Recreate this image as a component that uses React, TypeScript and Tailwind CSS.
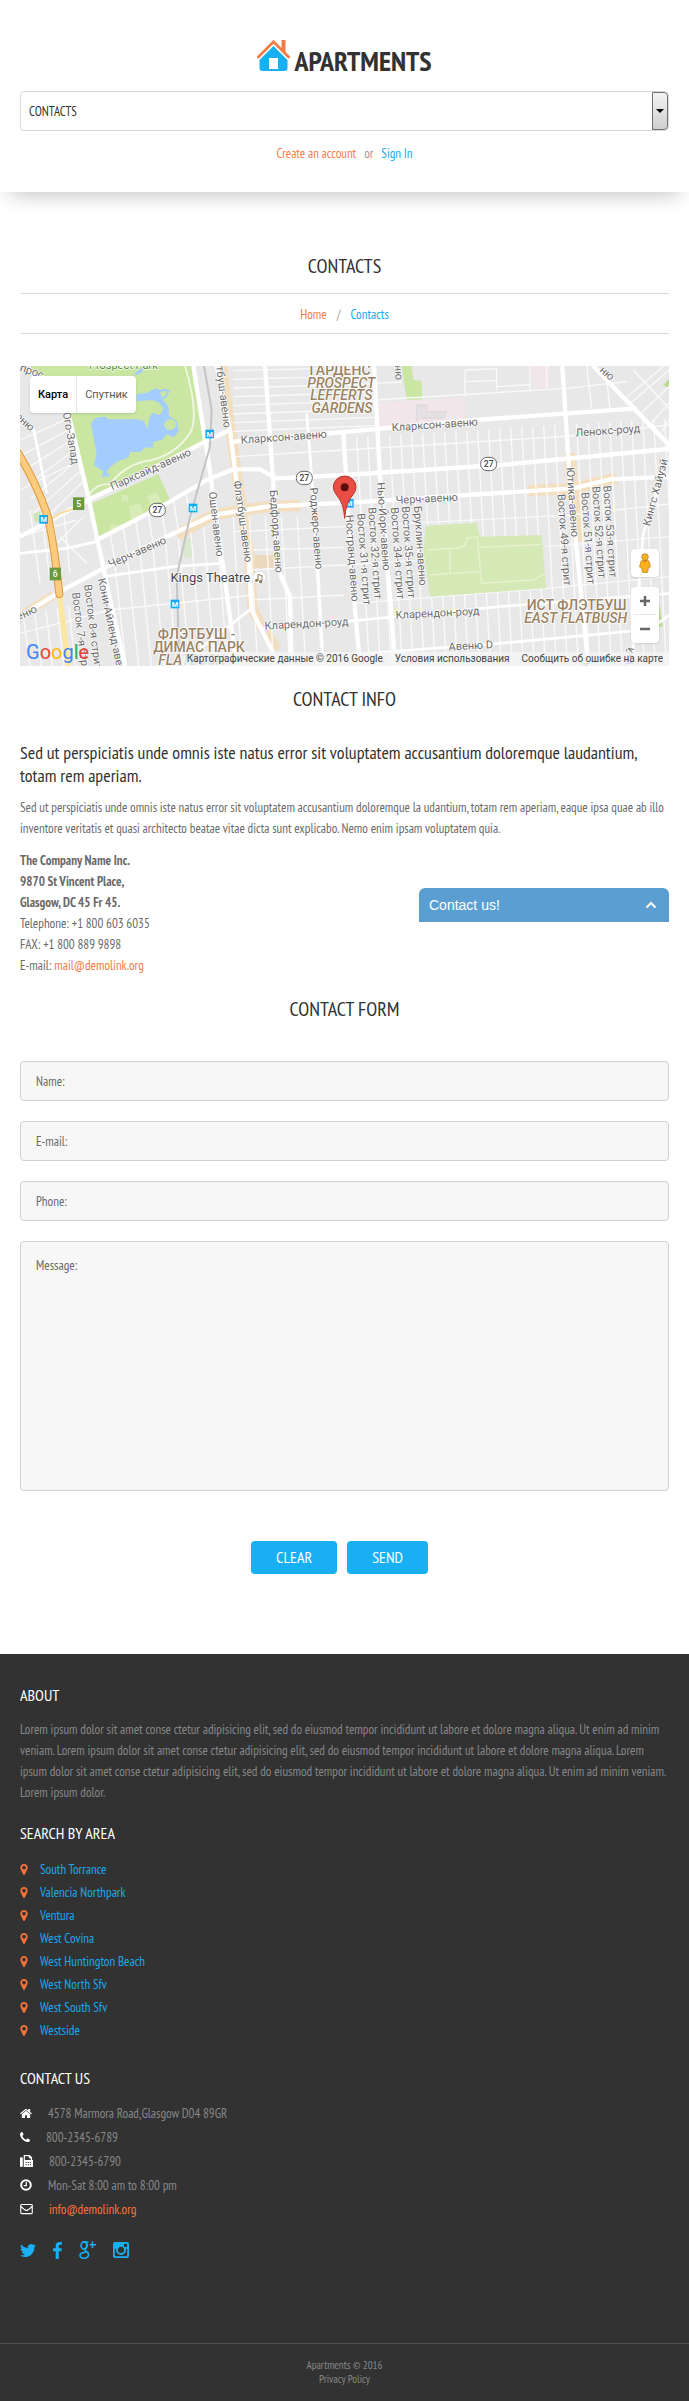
import { useState } from "react";
import type { ReactNode } from "react";

const areas = [
  "South Torrance",
  "Valencia Northpark",
  "Ventura",
  "West Covina",
  "West Huntington Beach",
  "West North Sfv",
  "West South Sfv",
  "Westside",
];

const fields = [
  { id: "name", label: "Name:", type: "text" },
  { id: "email", label: "E-mail:", type: "email" },
  { id: "phone", label: "Phone:", type: "tel" },
];

// [text, x, y, rotation]
const streets: [string, number, number, number][] = [
  ["Кларксон-авеню", 852, 272, -4],
  ["Кларксон-авеню", 1305, 235, -4],
  ["Парксайд-авеню", 456, 368, -24],
  ["Черч-авеню", 416, 616, -24],
  ["Черч-авеню", 1281, 457, -3],
  ["Ошен-авеню", 638, 524, 83],
  ["Флэтбуш-авеню", 718, 516, 82],
  ["тбуш-авеню", 660, 142, 83],
  ["Бедфорд-авеню", 818, 545, 86],
  ["Роджерс-авеню", 938, 536, 86],
  ["Кони-Айленд-авеню", 326, 840, 78],
  ["Восток 8-я стрит", 268, 832, 83],
  ["Восток 7-я стрит", 232, 856, 83],
  ["Ого-Запад", 202, 266, 80],
  ["Кларендон-роуд", 920, 832, -3],
  ["Кларендон-роуд", 1313, 800, -3],
  ["Авеню D", 1413, 898, -3],
  ["Ленокс-роуд", 1824, 253, -4],
  ["Ностранд-авеню", 1046, 625, 86],
  ["Восток 31-я стрит", 1081, 628, 86],
  ["Восток 32-я стрит", 1114, 610, 86],
  ["Нью-Йорк-авеню", 1140, 530, 86],
  ["Восток 34-я стрит", 1182, 610, 86],
  ["Восток 35-я стрит", 1215, 607, 86],
  ["Бруклин-авеню", 1250, 588, 86],
  ["Восток 49-я стрит", 1682, 570, 86],
  ["Ютика-авеню", 1707, 457, 86],
  ["Восток 51-я стрит", 1753, 565, 86],
  ["Восток 52-я стрит", 1786, 547, 86],
  ["Восток 53-я стрит", 1819, 545, 86],
  ["Кингс Хайуэй", 1977, 430, -75],
  ["еню", 84, 798, -24],
  ["еню", 68, 224, 42],
  ["прос", 92, 74, 20],
  ["ню", 1185, 68, 86],
  ["ню", 1814, 78, 42],
  ["Ют", 1747, 960, 86],
  ["йуэй", 1896, 930, -80],
];

const districts: [string, number, number, boolean][] = [
  ["ГАРДЕНС", 1020, 74, false],
  ["PROSPECT", 1024, 113, true],
  ["LEFFERTS", 1024, 151, true],
  ["GARDENS", 1026, 190, true],
  ["ФЛЭТБУШ -", 590, 868, false],
  ["ДИМАС ПАРК", 597, 907, false],
  ["FLATBUSH", 575, 946, true],
  ["ИСТ ФЛЭТБУШ", 1730, 779, false],
  ["EAST FLATBUSH", 1727, 819, true],
];

const mainRoads = [
  "M205 190L265 440L320 700L375 948",
  "M60 560L265 450L470 350L605 280L690 240",
  "M700 275L1032 246L1400 212L1910 175",
  "M290 570L475 475L620 390L700 358H780L830 385L1032 375L1500 345L2007 297",
  "M60 800L180 725L310 655L500 560L640 495L800 470L1100 455L1400 435L1720 415L1830 388L2007 380",
  "M580 48L625 330L665 620L710 948",
  "M650 48L690 240L710 400L745 620L755 780L840 948",
  "M795 48L820 400L835 660L870 740L875 948",
  "M1122 48L1140 380L1175 800L1185 948",
  "M1030 250L1060 720L1080 948",
  "M1687 48L1710 400L1740 700L1765 948",
  "M1780 48L2007 285",
];

const midRoads = [
  "M100 235L140 430",
  "M60 610L200 595L290 575",
  "M920 190L945 500L970 948",
  "M790 835L1032 815L1500 770L2007 730",
  "M1032 915L1500 880L1950 838L2007 795",
  "M600 895L755 775",
  "M310 680L520 650L660 640",
  "M2000 330L1930 550L1895 948",
];

const minorRoads = [
  ...[0, 1, 2, 3, 4, 5, 6, 7].map((i) => `M700 ${62 + i * 26}L1125 ${52 + i * 25}`),
  ...[0, 1, 2, 3, 4, 5, 6].map((i) => `M${60 + i * 8} ${270 + i * 44}L${205 + i * 9} ${205 + i * 30}`),
  ...[0, 1, 2, 3, 4, 5, 6, 7, 8].map((i) => `M${345 + i * 38} ${650 - i * 17}L${378 + i * 38} 948`),
  ...[0, 1, 2, 3, 4, 5, 6].map((i) => `M${330 + i * 38} ${548 - i * 20}L${346 + i * 38} ${640 - i * 19}`),
  ...Array.from({ length: 29 }, (_, i) => `M${1070 + i * 33} ${262 - i * 2}L${1108 + i * 33} 948`),
  ...[0, 1, 2, 3, 4, 5].map((i) => `M${700 + i * 48} 500L${725 + i * 48} 948`),
  ...[0, 1, 2, 3].map((i) => `M${90 + i * 34} ${480 + i * 5}L${120 + i * 30} ${700 - i * 10}`),
  ...[0, 1, 2, 3, 4].map((i) => `M${70 + i * 34} ${800 - i * 8}L${90 + i * 34} 948`),
  ...[0, 1, 2, 3, 4].map((i) => `M${1885 + i * 30} ${165 + i * 32}L${2007} ${60 + i * 50}`),
  "M60 420L240 330",
  "M60 850L330 780L760 735",
  "M700 320L1032 300L1710 258L2007 225",
  "M700 545L1032 530L1710 495L2007 462",
  "M760 600L1032 592",
  "M750 660L1032 645L1280 630",
  "M1640 590L2007 560",
  "M1060 760L1640 715L2007 680",
  "M750 750L1032 735",
  "M60 560L230 510M150 600L250 500M180 560L260 640",
  "M1125 150L1700 115L1880 95",
  "M1125 100L1205 96M1395 60V140M1395 60L1490 56V120M1590 48V125M1640 48V118",
  "M1395 95L1490 92M1490 110L1590 104M1760 48L1775 175M1820 90L1830 175",
  "M1870 150L1990 50M1900 60L2007 175",
];

const trees = "M365 435h20v20h-20zM385 470l35-12 12 40-35 14zM440 440l30-14 14 26-30 14zM330 525h22v14h-22z";

function CityMap() {
  return (
    <svg
      viewBox="60 48 1947 900"
      preserveAspectRatio="xMidYMid slice"
      className="block h-[300px] w-full bg-[#e8e8e8] font-[Roboto,sans-serif]"
      role="img"
      aria-label="Map"
    >
      <path d="M90 48H582L608 272L345 405L265 440L205 190L180 150Z" fill="#cbe6a3" />
      <path d="M265 465L475 372L513 455L290 567Z" fill="#cbe6a3" />
      <path d="M100 490L150 480V515H105Z" fill="#cfe3b4" />
      <path d={trees} fill="#d8ecb9" />
      <path d="M548 570L578 560V618L552 625Z" fill="#dbe8d0" />
      <path d="M1205 48H1235L1240 90L1265 92L1267 148L1220 150Z" fill="#cbe6a3" />
      <path d="M1990 105L2007 88V115ZM1978 765L1988 830H1965V765Z" fill="#b9dd8d" />
      <path d="M1130 160L1395 142V205L1135 232ZM1590 48H1650L1645 110L1605 115Z" fill="#f3e6eb" />
      <path d="M1250 165h30v20h60l-10 20h-70l-12 8z" fill="#e4e0e4" stroke="#d2d2d2" strokeWidth="2" />

      {/* lake */}
      <path
        transform="translate(60 48)"
        d="M213 175Q222 152 245 153Q262 150 262 160L350 160L372 165L382 190L390 150L400 140L420 148L430 128L418 110L395 102L350 106V84L380 80L408 67L420 72L425 98L445 120L447 150L470 165L476 195L462 214L440 205L425 222L400 228L398 246L376 244L362 258L330 258L325 275L295 285L268 305L260 318L270 330L245 334L250 316L222 298L230 262Z"
        fill="#a3ccff"
      />
      <path d="M510 208a18 16 0 1 0 1 0z" fill="#cbe6a3" />
      <path d="M410 65L430 48L425 68L400 78Z" fill="#a3ccff" />
      <path d="M470 130Q490 115 505 122Q500 145 482 146" fill="none" stroke="#a3ccff" strokeWidth="6" />
      <path d="M268 432Q290 400 330 402Q370 350 430 335Q530 320 575 240Q595 180 555 48" fill="none" stroke="#f2f8e6" strokeWidth="5" />

      <g fill="none" stroke="#f3dfc0">
        <path d="M665 48L692 240L714 400L748 620L758 780L830 900" strokeWidth="32" />
        <path d="M530 555L640 495L800 470L900 466M1585 422L1720 415L1850 385M1710 310L1716 410L1735 575" strokeWidth="34" />
        <path d="M60 800L160 735" strokeWidth="26" />
      </g>
      <path d="M765 615H820V655H765Z" fill="#ecd9bd" />

      <g fill="none" stroke="#fafafa" strokeWidth="4">
        {minorRoads.map((d) => (
          <path key={d} d={d} />
        ))}
      </g>
      <path d="M1278 527L1430 518L1440 560L1625 555L1638 715L1290 740L1270 600Z" fill="#d5e9b7" />
      <path d="M1280 600L1350 595V670L1440 665M1350 595Q1400 600 1400 565L1432 560L1445 700L1600 690L1635 670M1440 592L1625 583M1290 675L1350 670" fill="none" stroke="#e9f1cf" strokeWidth="4" />
      <g fill="none" stroke="#fff" strokeWidth="8">
        {midRoads.map((d) => (
          <path key={d} d={d} />
        ))}
      </g>
      <g fill="none" stroke="#fff" strokeWidth="13" strokeLinejoin="round">
        {mainRoads.map((d) => (
          <path key={d} d={d} />
        ))}
      </g>
      <path d="M612 48L635 180L630 290L570 500L530 680L538 948" fill="none" stroke="#c4c4c4" strokeWidth="6" />

      {/* parkway */}
      <path d="M178 730L205 948" fill="none" stroke="#fbe7a4" strokeWidth="17" />
      <path d="M150 510L180 490L240 470" fill="none" stroke="#f8d9a0" strokeWidth="6" />
      <path d="M55 310Q115 410 145 505Q165 600 178 732" fill="none" stroke="#dc9a3c" strokeWidth="24" strokeLinecap="round" />
      <path d="M55 310Q115 410 145 505Q165 600 178 732" fill="none" stroke="#fccb7e" strokeWidth="18" strokeLinecap="round" />

      <g fontSize="33" fill="#6b6b6b" stroke="#fff" strokeWidth="4" strokeLinejoin="round" textAnchor="middle" className="[paint-order:stroke]">
        {streets.map(([label, x, y, r]) => (
          <text key={`${label}${x}`} transform={`translate(${x} ${y}) rotate(${r})`}>
            {label}
          </text>
        ))}
        <text x="370" y="58" fill="#4d8a35">Prospect Park</text>
        <text x="631" y="695" fontSize="39" fill="#444">Kings Theatre</text>
      </g>
      <g fontSize="42" fontWeight="500" fill="#9b8262" stroke="#fff" strokeWidth="5" strokeLinejoin="round" textAnchor="middle" className="[paint-order:stroke]">
        {districts.map(([label, x, y, italic]) => (
          <text key={label} x={x} y={y} fontStyle={italic ? "italic" : "normal"}>
            {label}
          </text>
        ))}
      </g>

      <circle cx="778" cy="683" r="19" fill="#fff" stroke="#ddd" strokeWidth="2" />
      <path d="M774 691V673L786 677V694" fill="none" stroke="#8d7a5f" strokeWidth="3" />
      <circle cx="770" cy="691" r="5" fill="#8d7a5f" />
      <circle cx="782" cy="695" r="5" fill="#8d7a5f" />

      <g fontSize="26" fontWeight="500" textAnchor="middle">
        {[[472, 480], [913, 384], [1466, 342]].map(([x, y]) => (
          <g key={x}>
            <rect x={x - 24} y={y - 20} width="48" height="40" rx="19" fill="#fff" stroke="#666" strokeWidth="3" />
            <text x={x} y={y + 9} fill="#444">27</text>
          </g>
        ))}
        {[["5", 236, 461], ["6", 166, 672]].map(([n, x, y]) => (
          <g key={n}>
            <rect x={Number(x) - 17} y={Number(y) - 19} width="34" height="38" fill="#6b9a3d" />
            <text x={x} y={Number(y) + 9} fill="#fff">{n}</text>
          </g>
        ))}
        {[[629, 252], [579, 474], [131, 508], [525, 762], [1048, 460]].map(([x, y]) => (
          <g key={x}>
            <rect x={x - 13} y={y - 13} width="26" height="26" fill="#18a8ee" />
            <text x={x} y={y + 8} fontSize="22" fontWeight="700" fill="#fff">M</text>
          </g>
        ))}
      </g>

      {/* pin */}
      <path
        d="M1034 505Q1031 460 1012 438Q1000 424 1000 412A34 34 0 0 1 1068 412Q1068 424 1056 438Q1037 460 1034 505Z"
        fill="#ea4d43"
        stroke="#b5362f"
        strokeWidth="3"
      />
      <circle cx="1034" cy="412" r="12" fill="#5c0f0c" />
    </svg>
  );
}

function MapPanel() {
  return (
    <section className="relative mt-8 overflow-hidden">
      <CityMap />
      <div className="absolute left-2.5 top-2.5 flex h-[37px] rounded-sm bg-white font-[Roboto,sans-serif] text-[11px] shadow">
        <button className="border-r border-gray-200 px-2 font-medium text-black">Карта</button>
        <button className="px-2 text-[#565656]">Спутник</button>
      </div>
      <button aria-label="Street View" className="absolute right-2.5 top-[183px] flex size-7 items-center justify-center rounded-sm bg-white shadow">
        <svg viewBox="0 0 12 20" className="h-5 w-3">
          <path d="M2 8Q6 6 10 8L11.500 14L9.500 14.500L8.500 19.500H3.500L2.500 14.500L.5 14Z" fill="#f9b21d" stroke="#b97f10" strokeWidth=".7" />
          <circle cx="6" cy="4" r="3.300" fill="#f9b21d" stroke="#b97f10" strokeWidth=".7" />
          <path d="M4 7.500L6 9.500L8 7.500Z" fill="#e06a1c" />
        </svg>
      </button>
      <div className="absolute right-2.5 top-[221px] flex w-7 flex-col rounded-sm bg-white px-[3px] shadow">
        <button aria-label="Zoom in" className="flex h-7 items-center justify-center border-b border-gray-200">
          <svg viewBox="0 0 12 12" className="size-3"><path d="M6 1V11M1 6H11" stroke="#666" strokeWidth="2.500" /></svg>
        </button>
        <button aria-label="Zoom out" className="flex h-7 items-center justify-center">
          <svg viewBox="0 0 12 12" className="size-3"><path d="M1 6H11" stroke="#666" strokeWidth="2.500" /></svg>
        </button>
      </div>
      <span className="absolute bottom-0.5 left-1.5 font-[Roboto,sans-serif] text-[20px] leading-6 text-[#4285f4]">
        G<span className="text-[#ea4335]">o</span><span className="text-[#fbbc05]">o</span>g<span className="text-[#34a853]">l</span><span className="text-[#ea4335]">e</span>
      </span>
      <div className="absolute bottom-0 right-0 flex gap-3 bg-[#f5f5f5]/80 px-1.5 font-[Roboto,sans-serif] text-[10px] leading-[14px] whitespace-nowrap text-[#444]">
        <span>Картографические данные © 2016 Google</span>
        <a href="#terms">Условия использования</a>
        <a href="#report">Сообщить об ошибке на карте</a>
      </div>
    </section>
  );
}

function FaIcon({ d, className, box = "0 0 1792 1792" }: { d: string; className: string; box?: string }) {
  return (
    <svg viewBox={box} className={className} fill="currentColor" fillRule="evenodd" aria-hidden="true">
      <path d={d} />
    </svg>
  );
}

const markerPath = "M1152 640q0-106-75-181t-181-75-181 75-75 181 75 181 181 75 181-75 75-181zm256 0q0 109-33 179l-364 774q-16 33-47.5 52t-67.5 19-67.5-19-46.5-52l-365-774q-33-70-33-179 0-212 150-362t362-150 362 150 150 362z";
const homePath = "M1472 992v480q0 26-19 45t-45 19h-384v-384h-256v384h-384q-26 0-45-19t-19-45v-480q0-1 .5-3t.5-3l575-474 575 474q1 2 1 6zm223-69l-62 74q-8 9-21 11h-3q-13 0-21-7l-692-577-692 577q-12 8-24 7-13-2-21-11l-62-74q-8-10-7-23.5t11-21.5l719-599q32-26 76-26t76 26l244 204v-195q0-14 9-23t23-9h192q14 0 23 9t9 23v408l219 182q10 8 11 21.5t-7 23.5z";
const phonePath = "M1600 1240q0 27-10 70.5t-21 68.5q-21 50-122 106-94 51-186 51-27 0-53-3.5t-57.5-12.5-47-14.5-55.5-20.5-49-18q-98-35-175-83-127-79-264-216t-216-264q-48-77-83-175-3-9-18-49t-20.5-55.5-14.5-47-12.5-57.5-3.5-53q0-92 51-186 56-101 106-122 25-11 68.5-21t70.5-10q14 0 21 3 18 6 53 76 11 19 30 54t35 63.5 31 53.5q3 4 17.5 25t21.5 35.5 7 28.5q0 20-28.5 50t-62 55-62 53-28.5 46q0 9 5 22.5t8.500 20.5 14 24 11.5 19q76 137 174 235t235 174q2 1 19 11.5t24 14 20.5 8.5 22.5 5q18 0 46-28.5t53-62 55-62 50-28.5q14 0 28.5 7t35.5 21.5 25 17.5q25 15 53.5 31t63.5 35 54 30q70 35 76 53 3 7 3 21z";
const twitterPath = "M1684 408q-67 98-162 167 1 14 1 42 0 130-38 259.5t-115.5 248.5-184.5 210.5-258 146-323 54.5q-271 0-496-145 35 4 78 4 225 0 401-138-105-2-188-64.5t-114-159.5q33 5 61 5 43 0 85-11-112-23-185.5-111.5t-73.5-205.5v-4q68 38 146 41-66-44-105-115t-39-154q0-88 44-163 121 149 294.5 238.5t371.5 99.5q-8-38-8-74 0-134 94.5-228.5t228.5-94.5q140 0 236 102 109-21 205-78-37 115-142 178 93-10 186-50z";
const facebookPath = "M1343 12v264h-157q-86 0-116 36t-30 108v189h293l-39 296h-254v759h-306v-759h-255v-296h255v-218q0-186 104-288.5t277-102.5q147 0 228 12z";
const instagramPath = "M1490 1426v-648h-135q20 63 20 131 0 126-64 232.5t-174 168.5-240 62q-197 0-337-135.5t-140-327.5q0-68 20-131h-141v648q0 26 17.5 43.5t43.5 17.5h1069q25 0 43-17.5t18-43.5zm-284-533q0-124-90.5-211.5t-218.5-87.5q-127 0-217.5 87.5t-90.5 211.5 90.5 211.5 217.5 87.5q128 0 218.5-87.5t90.5-211.5zm284-360v-165q0-28-20-48.5t-49-20.5h-174q-29 0-49 20.5t-20 48.5v165q0 29 20 49t49 20h174q29 0 49-20t20-49zm174-208v1142q0 81-58 139t-139 58h-1142q-81 0-139-58t-58-139v-1142q0-81 58-139t139-58h1142q81 0 139 58t58 139z";

const contacts: { icon: ReactNode; text: ReactNode }[] = [
  { icon: <FaIcon d={homePath} box="60 200 1672 1392" className="h-[11px] w-3" />, text: "4578 Marmora Road,Glasgow D04 89GR" },
  { icon: <FaIcon d={phonePath} box="192 256 1408 1280" className="h-[11px] w-2.5" />, text: "800-2345-6789" },
  {
    icon: (
      <svg viewBox="0 0 14 14" className="h-3.5 w-[13px]" aria-hidden="true">
        <rect y="3" width="3" height="10.500" rx="1" fill="#fff" />
        <path d="M4 13.500V.5H10.500L13 3V6H14V13.500Z" fill="#fff" />
        <path d="M5.300 2H9.500V4H11.500V6H5.300Z" fill="#323232" />
        <path d="M6 8h1.200v1.100h-1.200zM8.300 8h1.200v1.100h-1.200zM10.600 8h1.200v1.100h-1.200zM6 10.600h1.200v1.100h-1.200zM8.300 10.600h1.200v1.100h-1.200zM10.600 10.600h1.200v1.100h-1.200z" fill="#323232" />
      </svg>
    ),
    text: "800-2345-6790",
  },
  {
    icon: (
      <svg viewBox="0 0 12 12" className="size-3" fill="none" stroke="#fff" strokeWidth="2" aria-hidden="true">
        <circle cx="6" cy="6" r="4.800" />
        <path d="M6.300 3V6.600H3.800" strokeWidth="1.200" />
      </svg>
    ),
    text: "Mon-Sat 8:00 am to 8:00 pm",
  },
  {
    icon: (
      <svg viewBox="0 0 14 12" className="h-3 w-[13px]" fill="none" stroke="#fff" strokeWidth="1.200" aria-hidden="true">
        <rect x=".8" y="1.200" width="12.400" height="9.800" rx="1" />
        <path d="M1 3.300Q5.500 7.600 7 7.600T13 3.300" />
      </svg>
    ),
    text: <a href="mailto:info@demolink.org" className="text-[#fa7438]">info@demolink.org</a>,
  },
];

function Logo() {
  return (
    <a href="#home" className="flex items-end justify-center gap-1 text-[28px] leading-7 font-bold text-[#323232]">
      <svg viewBox="0 0 33 31" className="h-[31px] w-[33px]" aria-hidden="true">
        <path d="M1.300 17L16.500 1.800L31.700 17" fill="none" stroke="#f47b45" strokeWidth="2.700" strokeLinecap="round" />
        <path d="M24.500 0H28.500V14L24.500 10Z" fill="#f47b45" />
        <path d="M16.500 6L30.500 20V28Q30.500 31 27.500 31H5.500Q2.500 31 2.500 28V20Z" fill="#18b0f3" />
        <path d="M12 18H21V29H12Z" fill="#fff" />
      </svg>
      <span className="-mb-1">APARTMENTS</span>
    </a>
  );
}

function Title({ children }: { children: ReactNode }) {
  return <h2 className="text-center text-[20px] leading-6 text-[#323232]">{children}</h2>;
}

function FooterTitle({ children }: { children: ReactNode }) {
  return <h3 className="text-[16px] leading-5 text-white">{children}</h3>;
}

export default function App() {
  const [chatOpen, setChatOpen] = useState(false);

  return (
    <div className="bg-white font-['PT_Sans_Narrow','Open_Sans_Condensed',sans-serif] text-[13px] leading-[21px] text-[#6a6a6a]">
      <header className="h-48 px-5 pt-10 shadow-[0_12px_20px_-10px_rgba(0,0,0,0.25)]">
        <Logo />
        <div className="relative mt-5">
          <select
            aria-label="Menu"
            defaultValue="contacts"
            className="block h-10 w-full appearance-none rounded border border-[#d9d9d9] bg-white px-2 text-[#323232]"
          >
            <option value="home">HOME</option>
            <option value="contacts">CONTACTS</option>
          </select>
          <span className="pointer-events-none absolute inset-y-px right-px flex w-4 items-center justify-center rounded-r-sm border border-[#707070] bg-gradient-to-b from-[#f3f3f3] to-[#cfcfcf]">
            <svg viewBox="0 0 8 4" className="h-1 w-2"><path d="M0 0H8L4 4Z" /></svg>
          </span>
        </div>
        <p className="mt-3 flex justify-center gap-2 text-[#9a9a9a]">
          <a href="#register" className="text-[#f47b45]">Create an account</a>
          or
          <a href="#login" className="text-[#18a8ee]">Sign In</a>
        </p>
      </header>

      <main className="px-5 pt-[62px] pb-20">
        <Title>CONTACTS</Title>
        <nav className="mt-[15px] flex justify-center gap-2.5 border-y border-[#dadada] pt-2.5 pb-2 text-[#9a9a9a]">
          <a href="#home" className="text-[#f47b45]">Home</a>
          <span>/</span>
          <a href="#contacts" className="text-[#18a8ee]">Contacts</a>
        </nav>

        <MapPanel />

        <section className="relative mt-[21px]">
          <Title>CONTACT INFO</Title>
          <p className="mt-[30px] text-[18px] leading-[23px] text-[#323232]">
            Sed ut perspiciatis unde omnis iste natus error sit voluptatem accusantium doloremque laudantium, totam rem aperiam.
          </p>
          <p className="mt-2.5">
            Sed ut perspiciatis unde omnis iste natus error sit voluptatem accusantium doloremque la udantium, totam rem aperiam, eaque ipsa quae ab illo inventore veritatis et quasi architecto beatae vitae dicta sunt explicabo. Nemo enim ipsam voluptatem quia.
          </p>
          <address className="mt-[11px] not-italic">
            <strong className="block">The Company Name Inc.</strong>
            <strong className="block">9870 St Vincent Place,</strong>
            <strong className="block">Glasgow, DC 45 Fr 45.</strong>
            <p>Telephone: +1 800 603 6035</p>
            <p>FAX: +1 800 889 9898</p>
            <p>E-mail: <a href="mailto:mail@demolink.org" className="text-[#f47b45]">mail@demolink.org</a></p>
          </address>
          <button
            onClick={() => setChatOpen(!chatOpen)}
            aria-expanded={chatOpen}
            className="absolute right-0 bottom-[54px] flex h-[34px] w-[250px] items-center justify-between rounded-t-md bg-[#5b9fd2] px-2.5 font-['Liberation_Sans',sans-serif] text-[14px] text-white"
          >
            Contact us!
            <svg viewBox="0 0 12 8" className="mr-0.5 h-2 w-3" fill="none" stroke="#fff" strokeWidth="2"><path d="M1.500 6.500L6 2L10.500 6.500" /></svg>
          </button>
        </section>

        <section className="mt-[21px]">
          <Title>CONTACT FORM</Title>
          <form className="mt-10 flex flex-col gap-5">
            {fields.map((f) => (
              <input
                key={f.id}
                id={f.id}
                type={f.type}
                aria-label={f.label}
                placeholder={f.label}
                className="h-10 w-full rounded border border-[#d0d0d0] bg-[#f7f7f7] px-[15px] placeholder:text-[#6a6a6a]"
              />
            ))}
            <textarea
              aria-label="Message:"
              placeholder="Message:"
              className="h-[250px] w-full resize-none rounded border border-[#d0d0d0] bg-[#f7f7f7] px-[15px] py-[13px] placeholder:text-[#6a6a6a]"
            />
            <div className="mt-[30px] mr-2.5 flex justify-center gap-2.5 text-[16px] text-white">
              <button type="reset" className="h-[33px] rounded bg-[#18b0f3] px-[25px]">CLEAR</button>
              <button type="submit" className="h-[33px] rounded bg-[#18b0f3] px-[25px]">SEND</button>
            </div>
          </form>
        </section>
      </main>

      <footer className="bg-[#323232] text-[#878787]">
        <div className="px-5 pt-[31px] pb-[84px]">
          <FooterTitle>ABOUT</FooterTitle>
          <p className="mt-3.5">
            Lorem ipsum dolor sit amet conse ctetur adipisicing elit, sed do eiusmod tempor incididunt ut labore et dolore magna aliqua. Ut enim ad minim veniam. Lorem ipsum dolor sit amet conse ctetur adipisicing elit, sed do eiusmod tempor incididunt ut labore et dolore magna aliqua. Lorem ipsum dolor sit amet conse ctetur adipisicing elit, sed do eiusmod tempor incididunt ut labore et dolore magna aliqua. Ut enim ad minim veniam. Lorem ipsum dolor.
          </p>

          <div className="mt-5"><FooterTitle>SEARCH BY AREA</FooterTitle></div>
          <ul className="mt-[15px]">
            {areas.map((area) => (
              <li key={area} className="flex h-[23px] items-center">
                <FaIcon d={markerPath} box="384 128 1024 1536" className="mr-3 h-[11px] w-2 text-[#fa7438]" />
                <a href="#area" className="text-[#18a8ee]">{area}</a>
              </li>
            ))}
          </ul>

          <div className="mt-[26px]"><FooterTitle>CONTACT US</FooterTitle></div>
          <ul className="mt-[13px]">
            {contacts.map((c, i) => (
              <li key={i} className="flex h-6 items-center gap-4 text-white">
                {c.icon}
                <span className="text-[#878787]">{c.text}</span>
              </li>
            ))}
          </ul>

          <div className="mt-5 flex h-[18px] items-center gap-[17px] text-[#18b0f3]">
            <a href="#twitter" aria-label="Twitter"><FaIcon d={twitterPath} box="108 256 1576 1280" className="h-[13px] w-4" /></a>
            <a href="#facebook" aria-label="Facebook"><FaIcon d={facebookPath} box="479 0 864 1664" className="h-[17px] w-[9px]" /></a>
            <a href="#google" aria-label="Google Plus">
              <svg viewBox="0 0 17 18" className="h-[18px] w-[17px]" fill="none" stroke="currentColor" strokeWidth="1.600">
                <ellipse cx="5" cy="4.500" rx="3" ry="3.600" />
                <path d="M4 1H9.500M7 1.500Q9 4 7 7Q4.500 9 7.500 10.500Q10 12 9.500 14.500Q8.500 17.200 5 17.200Q.8 17 1 14Q1.500 11.500 7 11.200M13.500 .5V7M10.500 3.700H17" />
              </svg>
            </a>
            <a href="#instagram" aria-label="Instagram"><FaIcon d={instagramPath} box="128 128 1536 1536" className="size-4" /></a>
          </div>
        </div>
        <div className="border-t border-[#515151] pt-3.5 pb-[15px] text-center text-[11px] leading-[14px]">
          <p>Apartments © 2016</p>
          <p><a href="#privacy">Privacy Policy</a></p>
        </div>
      </footer>
    </div>
  );
}
